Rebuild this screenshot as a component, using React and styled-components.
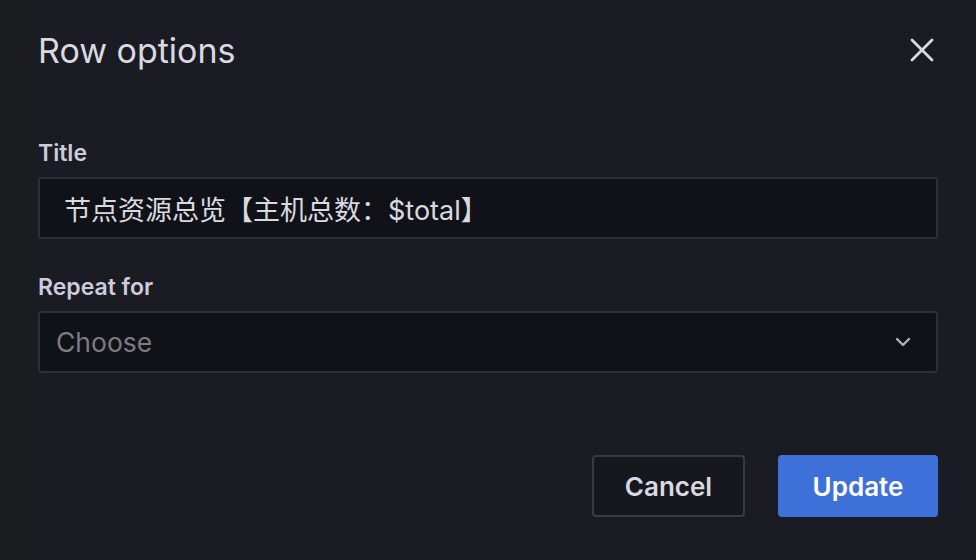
import React from 'react';
import styled, { createGlobalStyle } from 'styled-components';

const GlobalStyle = createGlobalStyle`
  html, body {
    margin: 0;
    padding: 0;
    background: #1c1d21;
    font-family: Inter, "Noto Sans CJK SC", sans-serif;
  }
`;

const Page = styled.div`
  width: 976px;
  height: 560px;
  display: flex;
  overflow: hidden;
`;

const Modal = styled.div`
  flex: 1;
  margin-left: 32px;
  background: #1b1b23;
  padding: 0 38px 0 6px;
  display: flex;
  flex-direction: column;
`;

const Header = styled.div`
  display: flex;
  align-items: center;
  justify-content: space-between;
  height: 100px;
  padding-bottom: 2px;
`;

const Heading = styled.h1`
  margin: 0;
  font-size: 34px;
  font-weight: 400;
  color: #d8d9e1;
`;

const CloseButton = styled.button`
  background: none;
  border: none;
  padding: 0;
  margin-right: 1px;
  width: 30px;
  height: 30px;
  display: flex;
  align-items: center;
  justify-content: center;
  color: #d8d9e1;
  cursor: pointer;
`;

const Field = styled.div`
  display: flex;
  flex-direction: column;
  margin-top: ${({ first }) => (first ? '37px' : '34px')};
`;

const Label = styled.label`
  font-size: 23px;
  font-weight: 600;
  color: #ccccdc;
  margin-bottom: 10px;
  line-height: 28px;
`;

const Input = styled.div`
  height: 62px;
  box-sizing: border-box;
  border: 2px solid #2f3037;
  border-radius: 4px;
  background: #111217;
  display: flex;
  align-items: center;
  padding: 0 24px;
  font-size: 27px;
  color: #d8d9e1;
  font-family: Inter, "Noto Sans CJK SC", sans-serif;
`;

const Select = styled(Input)`
  padding: 0 25px 0 16px;
  justify-content: space-between;
  color: #7b7c84;
  font-size: 26.5px;
`;

const Footer = styled.div`
  margin-top: 82px;
  display: flex;
  justify-content: flex-end;
  gap: 33px;
`;

const Button = styled.button`
  height: 62px;
  box-sizing: border-box;
  border-radius: 4px;
  font-family: Inter, sans-serif;
  font-size: 26px;
  font-weight: 600;
  padding: 0;
  width: ${({ w }) => w}px;
  border: 2px solid ${({ primary }) => (primary ? '#3d71d9' : '#3a3b42')};
  background: ${({ primary }) => (primary ? '#3d71d9' : '#17181e')};
  color: ${({ primary }) => (primary ? '#ffffff' : '#d8d9e1')};
  cursor: pointer;
`;

const App = () => (
  <Page>
    <GlobalStyle />
    <Modal>
      <Header>
        <Heading>Row options</Heading>
        <CloseButton>
          <svg width="24" height="24" viewBox="0 0 24 24" fill="none" stroke="currentColor" strokeWidth="2.8" strokeLinecap="round">
            <path d="M2 2 L22 22 M22 2 L2 22" />
          </svg>
        </CloseButton>
      </Header>
      <Field first>
        <Label>Title</Label>
        <Input>节点资源总览【主机总数：$total】</Input>
      </Field>
      <Field>
        <Label>Repeat for</Label>
        <Select>
          <span>Choose</span>
          <svg width="16" height="10" viewBox="0 0 16 10" fill="none" stroke="#b0b1b8" strokeWidth="2.4" strokeLinecap="round" strokeLinejoin="round">
            <path d="M2 2 L8 8 L14 2" />
          </svg>
        </Select>
      </Field>
      <Footer>
        <Button w={153}>Cancel</Button>
        <Button primary w={160}>Update</Button>
      </Footer>
    </Modal>
  </Page>
);

export default App;
